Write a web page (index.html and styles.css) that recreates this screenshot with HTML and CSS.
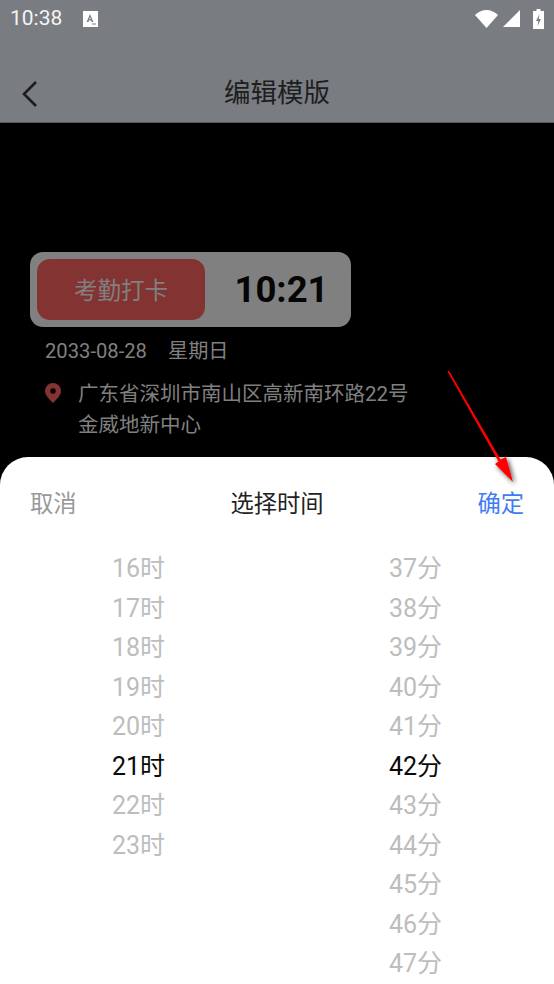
FILE: index.html
```html
<!DOCTYPE html>
<html lang="zh-CN">
<head>
<meta charset="utf-8">
<title>编辑模版</title>
<link rel="stylesheet" href="styles.css">
</head>
<body>
<div class="page">
  <header class="top">
    <div class="status">
      <span class="clock">10:38</span>
      <svg class="a-icon" viewBox="0 0 15 16" width="15" height="16"><path fill="#fff" fill-rule="evenodd" d="M0 0h15v16H0zM7 3 3.600 11h1.700l.6-1.600h2.200l.6 1.600h1.700L7 3zm0 3 .8 2.200H6.200zM9 12.500v1h4v-1z"/></svg>
      <span class="grow"></span>
      <svg class="wifi" viewBox="0 0 23 18" width="23" height="18"><path fill="#fff" d="M0 5C3 2 7 0 11.500 0S20 2 23 5L11.500 18z"/></svg>
      <svg class="cell" viewBox="0 0 17 17" width="17" height="17"><path fill="#fff" d="M17 0v17H0z"/></svg>
      <svg class="batt" viewBox="0 0 11 20" width="11" height="20"><path fill="#fff" fill-rule="evenodd" d="M3.500 0h4v2H11v18H0V2h3.500zM6.500 5 3 12h2.300L4.500 17 8 10H5.700z"/></svg>
    </div>
    <div class="nav">
      <svg class="back" viewBox="0 0 18 28" width="18" height="28"><path fill="none" stroke="#1c1d1e" stroke-width="2.600" d="M16 2 4 14l12 12"/></svg>
      <h1 class="title">编辑模版</h1>
    </div>
  </header>

  <main class="body">
    <div class="card">
      <div class="punch">考勤打卡</div>
      <div class="time">10:21</div>
    </div>
    <div class="date"><span>2033-08-28</span><span>星期日</span></div>
    <div class="addr">
      <svg class="pin" viewBox="0 0 16 20" width="16" height="20"><path fill="#843333" fill-rule="evenodd" d="M8 0a8 8 0 0 1 8 8c0 4.500-4.500 8.500-8 12C4.500 16.500 0 12.500 0 8a8 8 0 0 1 8-8zm0 5.300a2.700 2.700 0 1 0 0 5.400 2.700 2.700 0 0 0 0-5.400z"/></svg>
      <p>广东省深圳市南山区高新南环路22号<br>金威地新中心</p>
    </div>
  </main>

  <section class="sheet">
    <div class="sheet-head">
      <span class="cancel">取消</span>
      <span class="sheet-title">选择时间</span>
      <span class="ok">确定</span>
    </div>
    <div class="picker">
      <ul class="col">
        <li>16时</li><li>17时</li><li>18时</li><li>19时</li><li>20时</li>
        <li class="on">21时</li>
        <li>22时</li><li>23时</li>
      </ul>
      <ul class="col">
        <li>37分</li><li>38分</li><li>39分</li><li>40分</li><li>41分</li>
        <li class="on">42分</li>
        <li>43分</li><li>44分</li><li>45分</li><li>46分</li><li>47分</li>
      </ul>
    </div>
  </section>

  <svg class="arrow" viewBox="0 0 554 984" width="554" height="984">
    <defs><filter id="sh" x="-50%" y="-50%" width="200%" height="200%"><feDropShadow dx="2" dy="2" stdDeviation="2.500" flood-color="#000" flood-opacity=".7"/></filter></defs>
    <g filter="url(#sh)">
      <path fill="#f00" d="M447.500 371.500 449 370.700 500.500 459.500 506 457 513 482 495 464 498.500 461.500z"/>
    </g>
  </svg>
</div>
</body>
</html>
```
FILE: styles.css
```css
* { box-sizing: border-box; }
html, body { margin: 0; padding: 0; }
body { font-family: Roboto, "Noto Sans CJK SC", sans-serif; background: #000; }
.page { position: relative; width: 554px; height: 984px; overflow: hidden; display: flex; flex-direction: column; background: #000; }

.top { height: 123px; background: #797c80; border-bottom: 1px solid #55575a; flex: none; }
.status { height: 37px; display: flex; align-items: center; padding: 0 10px 0 10px; color: #fff; }
.clock { font-size: 21px; line-height: 37px; color: #f4f4f4; }
.a-icon { margin-left: 21px; }
.grow { flex: 1; }
.cell { margin-left: 5px; }
.batt { margin-left: 13px; }
.nav { height: 85px; position: relative; display: flex; align-items: center; justify-content: center; padding-top: 26px; }
.back { position: absolute; left: 20px; top: 43px; }
.title { margin: 0; font-size: 26.500px; font-weight: 400; color: #1d1e1f; line-height: 40px; }

.body { height: 334px; flex: none; padding: 129px 0 0 30px; }
.card { width: 321px; height: 75px; background: #808080; border-radius: 13px; padding: 7px; display: flex; align-items: center; }
.punch { width: 168px; height: 61px; background: #843333; border-radius: 13px; color: #808080; font-size: 23.500px; padding-bottom: 2px; display: flex; align-items: center; justify-content: center; }
.time { flex: 1; text-align: center; font-size: 36.500px; font-weight: 700; color: #050505; padding-left: 14px; }
.date { margin: 11px 0 0 15px; display: flex; gap: 21px; font-size: 20.200px; line-height: 26px; color: #808080; }
.addr { margin: 15px 0 0 15px; display: flex; align-items: flex-start; }
.pin { margin-top: 4px; flex: none; }
.addr p { margin: 0 0 0 17px; font-size: 20.500px; line-height: 31px; color: #808080; white-space: nowrap; }

.sheet { flex: 1; background: #fff; border-radius: 28px 28px 0 0; overflow: hidden; }
.sheet-head { display: flex; justify-content: space-between; align-items: center; height: 90px; padding: 0 30px; font-size: 23.300px; }
.cancel { color: #999; }
.sheet-title { color: #222; }
.ok { color: #3f7cf4; }
.picker { display: grid; grid-template-columns: 1fr 1fr; margin-top: 2px; }
.col { list-style: none; margin: 0; padding: 0; text-align: center; }
.col li { height: 39.500px; line-height: 39.500px; font-size: 25px; color: #bdbdbd; }
.col li.on { color: #0a0a0a; }

.arrow { position: absolute; left: 0; top: 0; pointer-events: none; }
```
